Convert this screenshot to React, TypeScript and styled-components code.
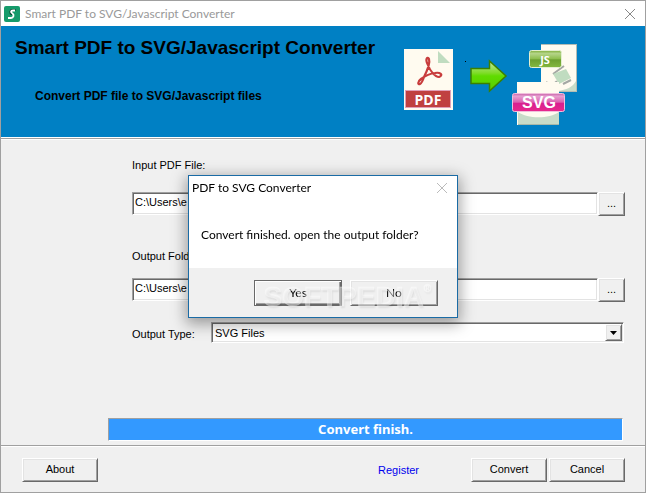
import React from "react";
import styled, { createGlobalStyle, css } from "styled-components";

const GlobalStyle = createGlobalStyle`
  * { box-sizing: border-box; }
  body { margin: 0; background: #f0f0f0; }
`;

const uiFont = '"Liberation Sans", Arial, sans-serif';
const systemFont = 'Lato, "Open Sans", sans-serif';

const raised = css`
  border: 1px solid;
  border-color: #fff #696969 #696969 #fff;
  box-shadow: inset 1px 1px 0 #e3e3e3, inset -1px -1px 0 #a0a0a0;
`;

const sunken = css`
  border: 1px solid;
  border-color: #a0a0a0 #fff #fff #a0a0a0;
  box-shadow: inset 1px 1px 0 #696969, inset -1px -1px 0 #e3e3e3;
`;

const Window = styled.div`
  display: flex;
  flex-direction: column;
  min-height: 100vh;
  border: 1px solid #a0a0a0;
  background: #f0f0f0;
  color: #000;
  font: 11px/16px ${uiFont};
`;

const TitleBar = styled.div`
  display: flex;
  align-items: center;
  gap: 5px;
  height: 25px;
  padding: 0 9px 0 3px;
  background: #fff;
  color: #999;
  font: 12px/16px ${systemFont};
`;

const TitleText = styled.span`
  flex: 1;
`;

const CloseButton = styled.button<{ $color: string }>`
  display: flex;
  padding: 0;
  border: 0;
  background: none;
  color: ${(p) => p.$color};
`;

const Banner = styled.header`
  display: flex;
  justify-content: space-between;
  align-items: flex-start;
  height: 111px;
  padding: 0 67px 0 14px;
  background: #0080c4;
`;

const BannerText = styled.div`
  padding-top: 10px;
`;

const BannerTitle = styled.h1`
  margin: 0;
  font: bold 19px/24px ${uiFont};
`;

const BannerSubtitle = styled.p`
  margin: 28px 0 0 20px;
  font: bold 12px/16px ${uiFont};
`;

const Artwork = styled.svg`
  flex: none;
  margin-top: 17px;
`;

const Rule = styled.hr`
  width: 100%;
  height: 2px;
  margin: 0;
  border: 0;
  border-top: 1px solid #a0a0a0;
  border-bottom: 1px solid #fff;
`;

const BannerRule = styled(Rule)`
  margin-top: 1px;
  box-shadow: 0 -1px 0 #fff;
`;

const Form = styled.form`
  display: flex;
  flex: 1;
  flex-direction: column;
  padding: 17px 20px 4px 107px;
`;

const Fields = styled.div`
  display: flex;
  flex-direction: column;
  padding-left: 24px;
`;

const Field = styled.div`
  display: flex;
  flex-direction: column;
  gap: 19px;
  margin-bottom: 33px;

  & + & {
    gap: 14px;
    margin-bottom: 21px;
  }
`;

const PathRow = styled.div`
  display: flex;
  height: 23px;
`;

const PathInput = styled.input`
  flex: 1;
  min-width: 0;
  padding: 0 2px 3px;
  border-radius: 0;
  outline: 0;
  background: #fff;
  color: #000;
  font: 11px/16px ${uiFont};
  ${sunken}
`;

const Button = styled.button<{ $width: number }>`
  width: ${(p) => p.$width}px;
  height: 24px;
  padding: 0 0 2px;
  border-radius: 0;
  background: #f0f0f0;
  color: #000;
  font: 11px/16px ${uiFont};
  ${raised}
`;

const TypeRow = styled.div`
  display: flex;
  align-items: flex-start;
`;

const TypeLabel = styled.label`
  width: 79px;
  padding-top: 4px;
`;

const SelectBox = styled.div`
  display: grid;
  flex: 1;
  grid-template-columns: 1fr 18px;
  align-items: center;
  height: 21px;
  margin-right: 1px;
  background: #fff;
  ${sunken}
`;

const Select = styled.select`
  grid-area: 1 / 1 / 2 / 3;
  width: 100%;
  padding: 0 20px 0 3px;
  border: 0;
  outline: 0;
  appearance: none;
  background: transparent;
  color: #000;
  font: 11px/16px ${uiFont};
`;

const SelectArrow = styled.span`
  display: flex;
  grid-area: 1 / 2 / 2 / 3;
  align-items: center;
  justify-content: center;
  width: 17px;
  height: 17px;
  background: #f0f0f0;
  pointer-events: none;
  ${raised}
`;

const Status = styled.output`
  margin-top: auto;
  margin-right: 2px;
  border: 1px solid;
  border-color: #a0a0a0 #fff #fff #a0a0a0;
  background: #3399ff;
  color: #fff;
  font: bold 13px/21px "Noto Sans", "Open Sans", sans-serif;
  text-align: center;
`;

const Footer = styled.footer`
  display: flex;
  align-items: center;
  gap: 2px;
  height: 45px;
  padding: 0 20px 0 21px;
`;

const RegisterLink = styled.a`
  margin-right: 50px;
  margin-left: auto;
  color: #00e;
  text-decoration: none;
`;

const Dialog = styled.div`
  position: fixed;
  top: 50%;
  left: 50%;
  display: flex;
  flex-direction: column;
  width: 270px;
  height: 143px;
  margin: -72px 0 0 -135px;
  border: 1px solid #1a6ba5;
  background: #fff;
  box-shadow: 0 4px 14px 2px rgba(0, 0, 0, 0.36);
  font: 12px/16px ${systemFont};
`;

const DialogTitle = styled.div`
  display: flex;
  align-items: center;
  justify-content: space-between;
  height: 25px;
  padding: 0 9px 0 3px;
`;

const DialogMessage = styled.p`
  flex: 1;
  margin: 0;
  padding: 26px 12px 0;
`;

const DialogActions = styled.div`
  display: flex;
  gap: 8px;
  justify-content: flex-end;
  height: 49px;
  padding: 12px 19px 0;
  background: #f0f0f0;
`;

const DialogButton = styled(Button)<{ $default?: boolean }>`
  height: 26px;
  padding: 0;
  font: 12px/16px ${systemFont};
  ${(p) =>
    p.$default &&
    css`
      border-color: #696969;
      box-shadow: inset 1px 1px 0 #fff, inset -1px -1px 0 #696969, inset -2px -2px 0 #a0a0a0;
    `}
`;

const Watermark = styled.div`
  position: absolute;
  right: 26px;
  bottom: 4px;
  display: flex;
  align-items: flex-start;
  color: rgba(255, 255, 255, 0.4);
  font: bold 28px/32px ${uiFont};
  text-shadow: 1px 2px 2px rgba(0, 0, 0, 0.08);
  -webkit-text-stroke: 1px rgba(255, 255, 255, 0.3);
  pointer-events: none;
`;

const WatermarkMark = styled.span`
  font-size: 10px;
  line-height: 16px;
`;

function CloseIcon() {
  return (
    <svg width="12" height="12" viewBox="0 0 12 12" aria-hidden="true">
      <path d="M1 1 L11 11 M11 1 L1 11" stroke="currentColor" fill="none" />
    </svg>
  );
}

function AppIcon() {
  return (
    <svg width="16" height="16" viewBox="0 0 16 16" aria-hidden="true">
      <rect width="16" height="16" rx="2" fill="#169b6b" />
      <path d="M11.500 4 H9 C6 4 5.500 7 8 8.500" fill="none" stroke="#063d2a" strokeWidth="2" />
      <path d="M11 4.500 H9 C6.500 4.500 6.500 6.500 8.500 7.500 C10.500 9 9.500 12 7 12 H4" fill="none" stroke="#fff" strokeWidth="1.800" />
    </svg>
  );
}

function ConversionArtwork() {
  return (
    <Artwork width="174" height="83" viewBox="0 0 174 83" aria-label="PDF to SVG and JS">
      <defs>
        <linearGradient id="arrow" x1="0" y1="0" x2="0" y2="1">
          <stop offset="0" stopColor="#c4e8a0" />
          <stop offset="0.400" stopColor="#7fdc28" />
          <stop offset="0.500" stopColor="#60dc00" />
          <stop offset="1" stopColor="#58cc00" />
        </linearGradient>
        <linearGradient id="js" x1="0" y1="0" x2="0" y2="1">
          <stop offset="0" stopColor="#7fae38" />
          <stop offset="0.180" stopColor="#b4d488" />
          <stop offset="0.480" stopColor="#8fbf50" />
          <stop offset="0.550" stopColor="#6ca030" />
          <stop offset="1" stopColor="#84b840" />
        </linearGradient>
        <linearGradient id="svg" x1="0" y1="0" x2="0" y2="1">
          <stop offset="0" stopColor="#c860a8" />
          <stop offset="0.150" stopColor="#e6a0d0" />
          <stop offset="0.480" stopColor="#dc60b0" />
          <stop offset="0.550" stopColor="#d82090" />
          <stop offset="1" stopColor="#e8288c" />
        </linearGradient>
      </defs>

      <rect y="6" width="49" height="61" fill="#fffbf0" />
      <path d="M34 8 L46 20 H34 Z" fill="#c0dcc0" />
      <path
        d="M20 34 C24 26 26 19 25 16 C23.500 13 21 16 23.500 21 C26 28 31 34 35 34 C40 32 36 29 31 30 C26 30.500 21 33 17 36 C13 39 14 42 16 41 C18 40 19 37 20 34 Z"
        fill="none"
        stroke="#c83c3c"
        strokeWidth="2.200"
      />
      <rect x="1.500" y="47.500" width="45" height="17" fill="#c04040" stroke="#e0a0b8" />
      <text x="24" y="62" textAnchor="middle" fill="#fff" fontFamily="Open Sans, sans-serif" fontSize="14" fontWeight="bold">PDF</text>

      <rect x="61" y="18" width="1" height="1" fill="#000" />
      <path d="M67 25.500 H85.500 V18 L102 33 L85.500 48 V40.500 H67 Z" fill="url(#arrow)" stroke="#3c8000" strokeWidth="1.500" />

      <rect x="137" y="1" width="36" height="48" fill="#b4bcb4" />
      <rect x="137" y="2" width="35" height="46" fill="#fffbf0" />
      <path d="M172 38 V48 H154 C162 47 169 44 172 38 Z" fill="#c8dcc8" />
      <path d="M142 39 C146 42 151 41 153 38 M149 31 L160 23 M159 41 L167 37" fill="none" stroke="#a4a8a4" strokeWidth="2" />
      <path d="M149 31 L162 26 L167 35 L155 41 Z" fill="#c0dcc0" />
      <rect x="125.500" y="7.500" width="32" height="17" rx="2" fill="url(#js)" stroke="#e4efd0" />
      <text x="141" y="21" textAnchor="middle" fill="#fff" fontFamily="Open Sans, sans-serif" fontSize="11" fontWeight="bold">JS</text>

      <rect x="113" y="39" width="42" height="43" fill="#fffbf0" />
      <path d="M114 69 C124 76 145 76 155 69 V82 H114 Z" fill="#c8dcc8" />
      <path d="M114 81.500 H155" stroke="#a8b8a8" />
      <rect x="108.500" y="50.500" width="52" height="18" rx="2" fill="url(#svg)" stroke="#f0c0dc" />
      <text x="135" y="65" textAnchor="middle" fill="#fff" fontFamily="Liberation Sans, sans-serif" fontSize="16" fontWeight="bold">SVG</text>
    </Artwork>
  );
}

interface PathFieldProps {
  id: string;
  label: string;
  value: string;
}

function PathField({ id, label, value }: PathFieldProps) {
  return (
    <Field>
      <label htmlFor={id}>{label}</label>
      <PathRow>
        <PathInput id={id} defaultValue={value} />
        <Button type="button" $width={27} aria-label={`Browse: ${label}`}>...</Button>
      </PathRow>
    </Field>
  );
}

export default function App() {
  return (
    <>
      <GlobalStyle />
      <Window>
        <TitleBar>
          <AppIcon />
          <TitleText>Smart PDF to SVG/Javascript Converter</TitleText>
          <CloseButton type="button" $color="#888" aria-label="Close">
            <CloseIcon />
          </CloseButton>
        </TitleBar>
        <Banner>
          <BannerText>
            <BannerTitle>Smart PDF to SVG/Javascript Converter</BannerTitle>
            <BannerSubtitle>Convert PDF file to SVG/Javascript files</BannerSubtitle>
          </BannerText>
          <ConversionArtwork />
        </Banner>
        <BannerRule />
        <Form>
          <Fields>
            <PathField id="input-file" label="Input PDF File:" value="C:\Users\e" />
            <PathField id="output-folder" label="Output Folder:" value="C:\Users\e" />
            <TypeRow>
              <TypeLabel htmlFor="output-type">Output Type:</TypeLabel>
              <SelectBox>
                <Select id="output-type">
                  <option>SVG Files</option>
                </Select>
                <SelectArrow>
                  <svg width="7" height="4" viewBox="0 0 7 4" aria-hidden="true">
                    <path d="M0 0 H7 L3.500 4 Z" />
                  </svg>
                </SelectArrow>
              </SelectBox>
            </TypeRow>
          </Fields>
          <Status>Convert finish.</Status>
        </Form>
        <Rule />
        <Footer>
          <Button type="button" $width={76}>About</Button>
          <RegisterLink href="#register">Register</RegisterLink>
          <Button type="button" $width={76}>Convert</Button>
          <Button type="button" $width={76}>Cancel</Button>
        </Footer>
      </Window>
      <Dialog role="dialog" aria-labelledby="dialog-title">
        <DialogTitle>
          <span id="dialog-title">PDF to SVG Converter</span>
          <CloseButton type="button" $color="#bbb" aria-label="Close dialog">
            <CloseIcon />
          </CloseButton>
        </DialogTitle>
        <DialogMessage>Convert finished. open the output folder?</DialogMessage>
        <DialogActions>
          <DialogButton type="button" $width={88} $default>Yes</DialogButton>
          <DialogButton type="button" $width={88}>No</DialogButton>
        </DialogActions>
        <Watermark aria-hidden="true">
          SOFTPEDIA<WatermarkMark>®</WatermarkMark>
        </Watermark>
      </Dialog>
    </>
  );
}
